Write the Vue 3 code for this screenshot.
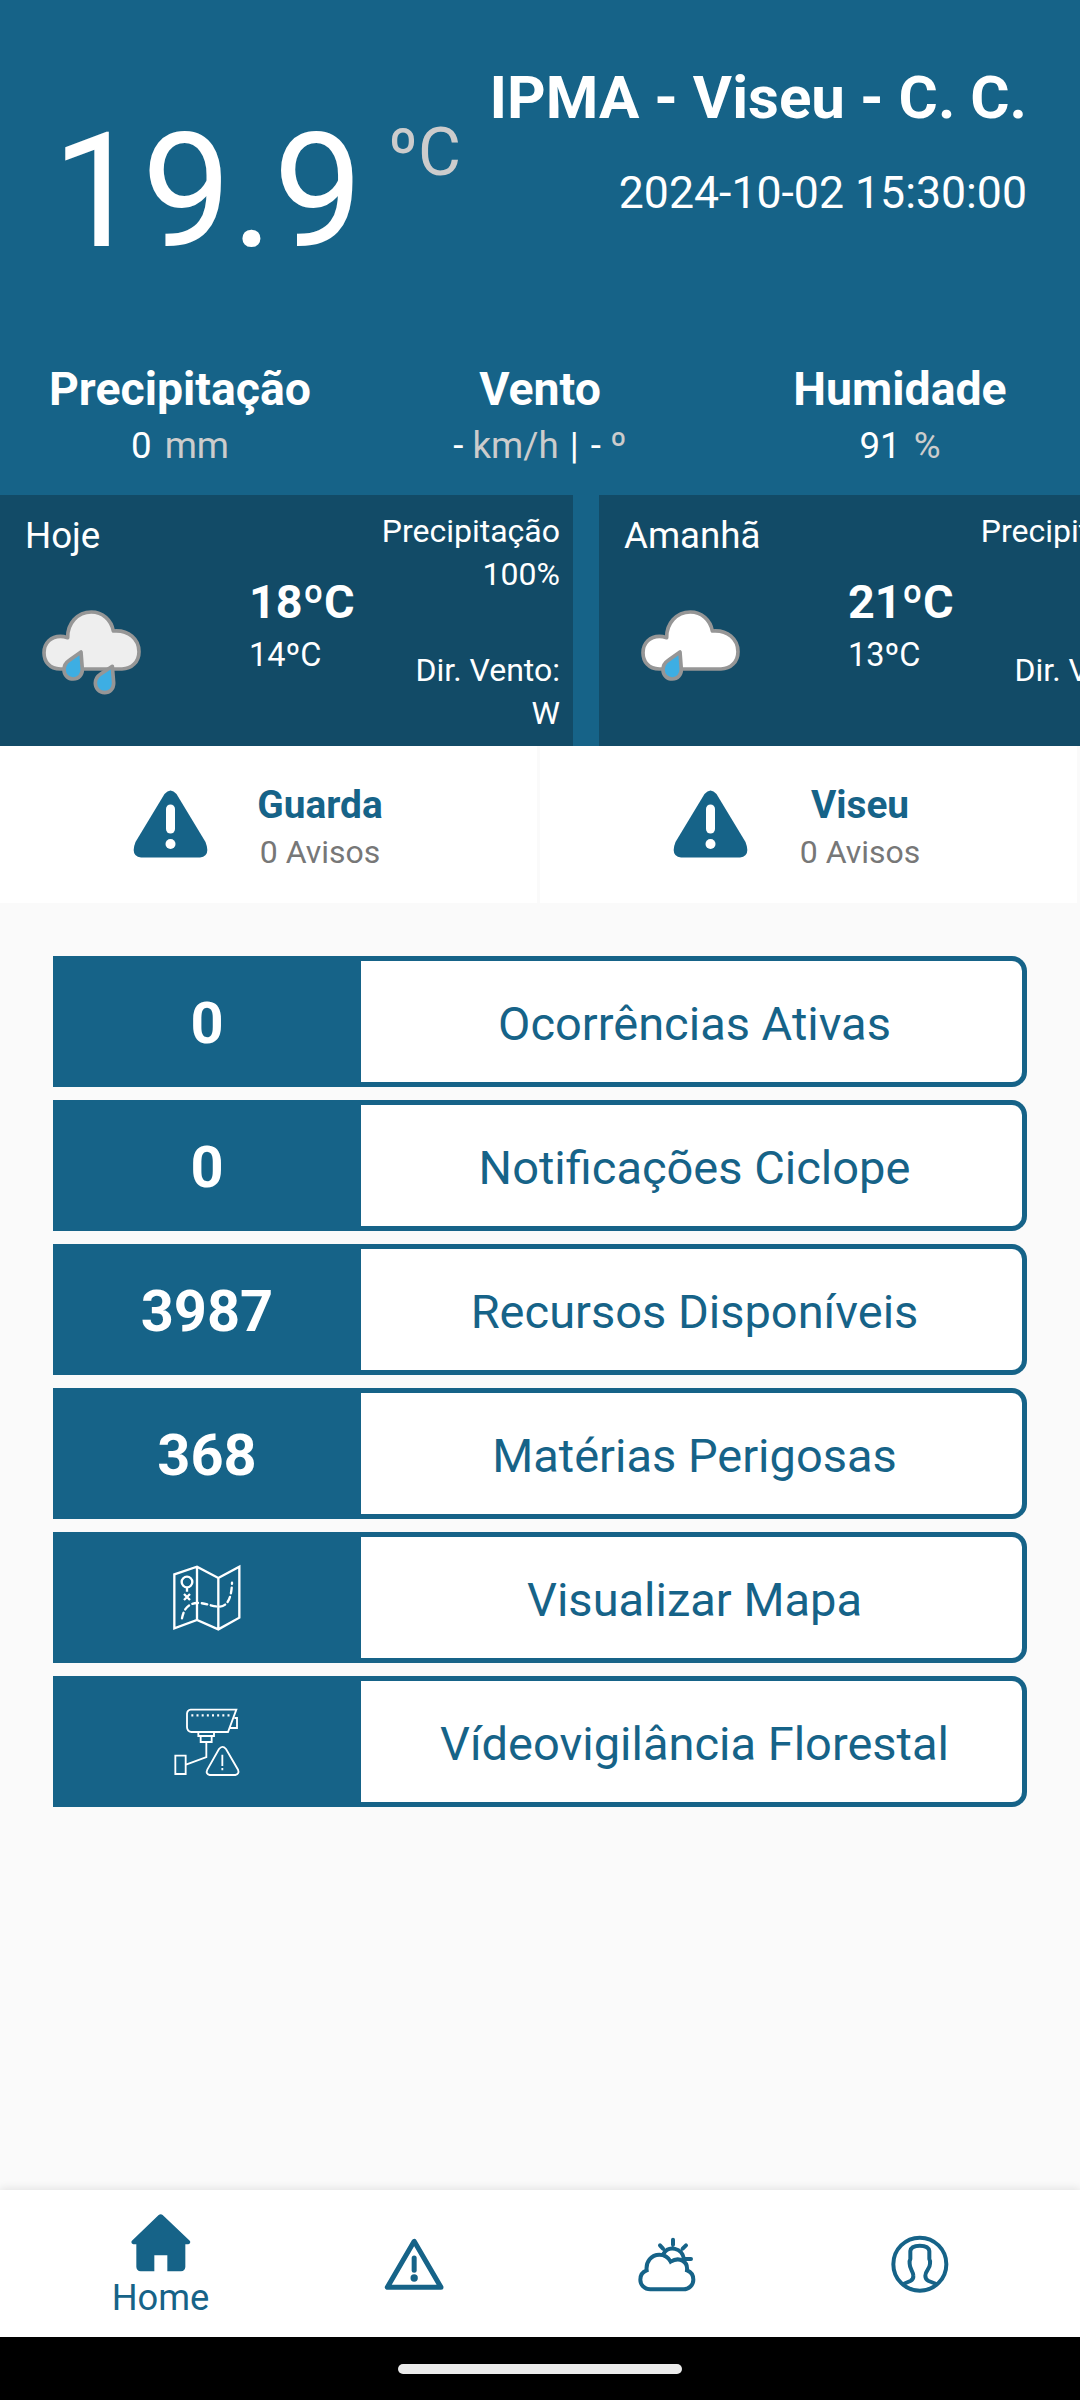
<script setup>
const stats = [
  { title: 'Precipitação', parts: [['0', ''], [' mm', 'unit wide']] },
  { title: 'Vento', parts: [['-', ''], [' km/h', 'unit'], [' | ', 'sep'], ['- ', ''], ['º', 'unit']] },
  { title: 'Humidade', parts: [['91', ''], [' %', 'unit wide']] },
]

const days = [
  { label: 'Hoje', max: '18ºC', min: '14ºC', rain: '100%', wind: 'W', cloud: '#eeeeee', heavy: true },
  { label: 'Amanhã', max: '21ºC', min: '13ºC', rain: '', wind: '', cloud: '#ffffff', heavy: false },
]

const warnings = ['Guarda', 'Viseu']

const rows = [
  { value: '0', label: 'Ocorrências Ativas' },
  { value: '0', label: 'Notificações Ciclope' },
  { value: '3987', label: 'Recursos Disponíveis' },
  { value: '368', label: 'Matérias Perigosas' },
  { icon: 'map', label: 'Visualizar Mapa' },
  { icon: 'camera', label: 'Vídeovigilância Florestal' },
]
</script>

<template>
  <div class="screen">
    <header class="weather">
      <div class="now">
        <div class="temp">
          <span class="temp-value">19.9</span>
          <span class="temp-unit">ºC</span>
        </div>
        <div class="station">
          <h1>IPMA - Viseu - C. C.</h1>
          <time>2024-10-02 15:30:00</time>
        </div>
      </div>
      <div class="stats">
        <div v-for="s in stats" :key="s.title" class="stat">
          <h2>{{ s.title }}</h2>
          <p><span v-for="(p, i) in s.parts" :key="i" :class="p[1]">{{ p[0] }}</span></p>
        </div>
      </div>
      <div class="forecast">
        <article v-for="d in days" :key="d.label" class="day">
          <div class="day-left">
            <span class="day-label">{{ d.label }}</span>
            <svg class="cloud" viewBox="0 0 360 330" stroke="#969696" stroke-width="11" stroke-linejoin="round">
              <path :fill="d.cloud" d="M91 237 C58 237 42 214 42 188 C42 158 64 139 91 139 C101 139 107 141 113 143 C112 101 142 66 184 66 C218 66 244 90 250 123 C296 119 327 147 327 185 C327 215 305 237 276 237 Z" />
              <path fill="#3daee3" d="M153 186 L157 238 C157 255 146 267 130 267 C114 267 102 255 102 239 C102 227 109 217 118 211 Z" />
              <path v-if="d.heavy" fill="#3daee3" d="M247 229 L251 279 C251 296 240 308 224 308 C207 308 196 295 196 279 C196 267 203 258 212 252 Z" />
            </svg>
          </div>
          <div class="day-temps">
            <strong>{{ d.max }}</strong>
            <span>{{ d.min }}</span>
          </div>
          <div class="day-right">
            <div>Precipitação<br />{{ d.rain }}</div>
            <div>Dir. Vento:<br />{{ d.wind }}</div>
          </div>
        </article>
      </div>
    </header>

    <section class="warnings">
      <div v-for="w in warnings" :key="w" class="warning">
        <svg class="alert" viewBox="0 0 75 68">
          <path fill="#166388" d="M31.500 4 Q37.500 -3 43.500 4 L72.500 52 Q78 66 67 67.500 H8 Q-3 66 2.500 52 Z" />
          <path stroke="#fff" stroke-width="9" stroke-linecap="round" d="M37.500 19 V39" />
          <circle cx="37.500" cy="54" r="5" fill="#fff" />
        </svg>
        <div class="warning-text">
          <strong>{{ w }}</strong>
          <span>0 Avisos</span>
        </div>
      </div>
    </section>

    <main class="rows">
      <div v-for="r in rows" :key="r.label" class="row">
        <div class="row-value">
          <span v-if="r.value">{{ r.value }}</span>
          <svg v-else-if="r.icon === 'map'" width="100" height="90" viewBox="-9 7 300 270" fill="none" stroke="#fff" stroke-width="7">
            <path d="M43 71 L111 48 L175 82 L238 48 V201 L175 236 L111 208 L43 233 Z M111 48 V208 M175 82 V236" />
            <circle cx="81" cy="94" r="16" />
            <path d="M81 110 V123 M72 130 L90 148 M90 130 L72 148" />
            <path stroke-dasharray="17 11" stroke-linecap="round" d="M66 203 C72 172 87 158 112 157 C142 157 155 168 178 168 C207 167 215 132 216 96" />
          </svg>
          <svg v-else width="100" height="100" viewBox="-9 4 300 300" fill="none" stroke="#fff" stroke-width="5.500">
            <path d="M92 57 H229 L204 124 H94 Q81 122 81 109 V69 Q82 58 92 57 Z" />
            <path stroke-width="7" stroke-dasharray="6 9.500" d="M94 74 H211" />
            <path d="M223 82 H231 V112 H210 M115 125 V136 H162 V125 M122 136 V154 H155 V136 M139 154 V199 L78 222 M46 195 H77 V250 H46 Z" />
            <path d="M177 175 Q187 162 198 175 L234 237 Q239 250 226 253 H149 Q136 250 142 237 Z M187 192 V226 M187 232 V239" />
          </svg>
        </div>
        <div class="row-label">{{ r.label }}</div>
      </div>
    </main>

    <nav class="tabs">
      <a class="tab home">
        <svg viewBox="152 128 180 180"><path fill="#166388" d="M235 134 Q241 129 247 134 L329 212 Q332 220 324 222 H315 V290 Q314 302 302 303 H261 V255 H222 V303 H181 Q169 302 168 290 V222 H159 Q151 220 154 212 Z" /></svg>
        <span>Home</span>
      </a>
      <a class="tab">
        <svg viewBox="910 190 180 180" fill="none" stroke="#166388" stroke-linecap="round" stroke-linejoin="round">
          <path stroke-width="15" d="M1000.500 212 L920 350 H1081 Z" />
          <path stroke-width="15" d="M1000.500 262 V299" />
          <circle cx="1000.500" cy="322" r="11" fill="#166388" stroke="none" />
        </svg>
      </a>
      <a class="tab">
        <svg viewBox="110 190 180 180" fill="none" stroke="#166388" stroke-width="12" stroke-linecap="round">
          <path d="M150 356 C132 356 120 342 120 327 C120 312 128 303 139 299 C136 273 153 252 177 252 C193 252 204 260 211 273 C237 257 263 272 260 299 C271 303 279 313 279 327 C279 343 266 356 249 356 Z" />
          <path d="M189 250 C205 223 245 231 251 265 H272 M218 207 V222 M179 224 L188 234 M257 224 L247 234" />
        </svg>
      </a>
      <a class="tab">
        <svg viewBox="869 190 180 180" fill="none" stroke="#166388" stroke-width="12">
          <circle cx="958.500" cy="280.500" r="79.500" />
          <path stroke-linejoin="round" d="M909 340 L930 331 Q940 326 939 315 C938 300 928 295 928 279 Q927 270 930 265 V241 Q932 225 958.500 225 Q985 225 987 241 V265 Q990 270 989 279 C989 295 975 300 975 315 Q975 326 985 331 L1008 340" />
        </svg>
      </a>
    </nav>
    <footer class="gesture"><div class="pill"></div></footer>
  </div>
</template>

<style>
body {
  margin: 0;
}
</style>

<style scoped>
.screen {
  width: 1080px;
  height: 2400px;
  display: flex;
  flex-direction: column;
  overflow: hidden;
  background: #fafafa;
  font-family: Roboto, "Liberation Sans", sans-serif;
  color: #166388;
}
h1,
h2,
p {
  margin: 0;
}
.weather {
  height: 746px;
  display: flex;
  flex-direction: column;
  background: #166388;
  color: #fff;
}
.now {
  height: 362px;
  box-sizing: border-box;
  padding: 66px 53px 0 52px;
  display: flex;
  justify-content: space-between;
}
.temp {
  display: flex;
  gap: 25px;
  padding-top: 46px;
}
.temp-value {
  font-size: 159.500px;
  line-height: 160px;
}
.temp-unit {
  margin-top: 8px;
  font-size: 66px;
  line-height: 66px;
  color: #ccc;
}
.station {
  text-align: right;
  white-space: nowrap;
}
h1 {
  margin-top: 2px;
  font-size: 60.100px;
  line-height: 60px;
}
time {
  display: block;
  margin-top: 40px;
  font-size: 44.600px;
  line-height: 50px;
}
.stats {
  height: 133px;
  display: grid;
  grid-template-columns: repeat(3, 1fr);
  text-align: center;
}
h2 {
  font-size: 46.400px;
  line-height: 54px;
}
.stat p {
  margin-top: 8px;
  font-size: 36.700px;
  line-height: 44px;
  white-space: pre;
}
.unit {
  color: #ccc;
}
.wide {
  margin-left: 4px;
}
.sep {
  margin: 0 3px 0 2px;
}
.forecast {
  display: flex;
  gap: 26px;
  height: 251px;
  overflow: hidden;
}
.day {
  flex: none;
  width: 573px;
  box-sizing: border-box;
  padding: 0 13px 0 0;
  display: flex;
  background: #124b67;
}
.day-left {
  width: 249px;
  padding-top: 19px;
}
.day-label {
  display: block;
  margin-left: 25px;
  font-size: 36.700px;
  line-height: 44px;
}
.cloud {
  display: block;
  width: 120px;
  height: 110px;
  margin: 32px 0 0 30px;
}
.day-temps {
  display: flex;
  flex-direction: column;
  padding-top: 80px;
}
.day-temps strong {
  font-size: 46.750px;
  line-height: 54px;
}
.day-temps span {
  margin-top: 4px;
  font-size: 32.500px;
  line-height: 44px;
}
.day-right {
  margin-left: auto;
  padding-top: 15px;
  display: flex;
  flex-direction: column;
  gap: 53px;
  text-align: right;
  font-size: 32px;
  line-height: 43px;
}
.day-right div {
  height: 86px;
}
.warnings {
  height: 157px;
  display: flex;
  gap: 3px;
}
.warning {
  width: 537px;
  box-sizing: border-box;
  padding-left: 133px;
  display: flex;
  background: #fff;
}
.alert {
  width: 75px;
  height: 68px;
  margin-top: 44px;
}
.warning-text {
  width: 224px;
  padding-top: 37px;
  display: flex;
  flex-direction: column;
  text-align: center;
}
.warning-text strong {
  font-size: 38.800px;
  line-height: 44px;
}
.warning-text span {
  margin-top: 3px;
  font-size: 32px;
  line-height: 44px;
  color: #777;
}
.rows {
  flex: 1;
  padding: 53px 53px 0;
  display: flex;
  flex-direction: column;
  gap: 13px;
}
.row {
  height: 131px;
  box-sizing: border-box;
  display: flex;
  border: 5px solid #166388;
  border-left: 0;
  border-radius: 0 15px 15px 0;
  background: #fff;
}
.row-value {
  width: 308px;
  display: flex;
  align-items: center;
  justify-content: center;
  background: #166388;
  color: #fff;
  font-size: 57.750px;
  font-weight: 700;
}
.row-value span {
  padding-top: 3px;
}
.row-label {
  flex: 1;
  padding-left: 6px;
  text-align: center;
  font-size: 47px;
  line-height: 126px;
}
.tabs {
  height: 147px;
  box-sizing: border-box;
  padding: 0 34px;
  display: flex;
  background: #fff;
  box-shadow: 0 -2px 8px rgba(0, 0, 0, 0.09);
}
.tab {
  width: 253px;
  display: flex;
  flex-direction: column;
  align-items: center;
  justify-content: center;
}
.tab.home {
  justify-content: flex-start;
  padding-top: 23px;
}
.tab svg {
  width: 60px;
  height: 60px;
}
.tab span {
  margin-top: 4px;
  font-size: 36.300px;
  line-height: 42px;
}
.gesture {
  height: 63px;
  display: flex;
  justify-content: center;
  background: #000;
}
.pill {
  width: 284px;
  height: 10px;
  margin-top: 27px;
  border-radius: 5px;
  background: #ebebeb;
}
</style>
